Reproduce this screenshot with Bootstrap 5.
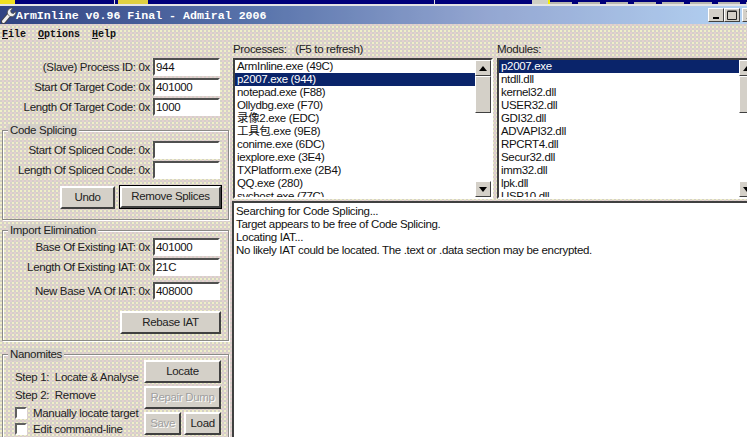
<!doctype html>
<html><head><meta charset="utf-8">
<link href="https://cdn.jsdelivr.net/npm/bootstrap@5.3.0/dist/css/bootstrap.min.css" rel="stylesheet">
<style>
html,body{height:437px;overflow:hidden;margin:0}
body{width:747px;background:#fff;font-family:"Liberation Sans","Noto Sans CJK SC",sans-serif;font-size:11.5px;letter-spacing:-.33px;line-height:13px;color:#111}
.topstrip{height:4px;background-color:#00007a;background-image:repeating-linear-gradient(90deg,#b8b8b0 0,#b8b8b0 22px,transparent 22px,transparent 28px),linear-gradient(90deg,#f0e020 0,#f0e020 15px,transparent 15px,transparent 114px,#ddd 114px,#ddd 115px,transparent 115px,transparent 118px,#e0d040 118px,#e0d040 148px,transparent 148px,transparent 434px,#ddd 434px,#ddd 435px,transparent 435px,transparent 532px,#cfcfc4 532px,#cfcfc4 548px,#f4f000 548px,#f4f000 550px,transparent 550px);background-size:197px 2px,100% 100%;background-position:right bottom,0 0;background-repeat:no-repeat}
.topline{height:2px;background:#e4e4e4}
.wframe{height:431px;background-color:#d4d0c8;background-image:radial-gradient(circle at 1px 1px,#f0eec8 .8px,transparent 1px),radial-gradient(circle at 3px 3px,#e4d0d0 .8px,transparent 1px);background-size:4px 4px}
.ttl{height:18px;background-color:#0a246a;background-image:radial-gradient(circle at 1px 1px,rgba(255,255,255,.16) .8px,transparent 1px),linear-gradient(90deg,#0a1f6a,#3a5a9c 35%,#7f95c8 65%,#a6caf0);background-size:2px 2px,100% 100%;color:#fff;font:bold 11.6px "Liberation Mono",monospace;letter-spacing:0;padding-left:1px}
.ttl svg{flex:none}
.wb{width:16px;height:14px;background:#d4d0c8;border:1px solid;border-color:#fff #404040 #404040 #fff;flex:none;display:flex;align-items:center;justify-content:center}
.wbs{margin-right:-11px}
.wbs .wb+.wb+.wb{margin-left:2px}
.menubar{height:18px;font-family:"Liberation Mono",monospace;font-weight:bold;font-size:10px;letter-spacing:0;padding:4px 2px;gap:12px}
.leftp{width:232px;flex:none}
.rowf{height:20px;display:flex;justify-content:flex-end;padding-right:12px;color:#222;line-height:18px}
.grp .rowf{padding-right:8px}
.fld{width:67px;height:18px;background:#fff;border:2px solid;border-color:#505050 #fff #fff #505050;padding:1px;margin-left:3px;flex:none;line-height:13px;color:#111}
.grp{border:1px solid #8a8a86;box-shadow:1px 1px 0 #fff,inset 1px 1px 0 #fff;position:relative;margin:0 3px 0 2px}
.grp>.lgd{position:absolute;top:-7px;left:5px;padding:0 2px;background:#d4d0c8;color:#222}
.bt{background:#d4d0c8;border:2px solid;border-color:#fff #404040 #404040 #fff;text-align:center;height:23px;line-height:18px;color:#222;flex:none}
.bt.def{outline:1px solid #000;height:22px;line-height:17px}
.bt.dis{color:#a0a0a0;text-shadow:1px 1px 0 #fff}
.btrow{display:flex;justify-content:flex-end;padding-right:7px;gap:5px}
.lbox{background:#fff;border:2px solid;border-color:#404040 #fff #fff #404040;overflow:hidden;position:relative;height:141px;width:260px}
.it{height:13px;padding-left:2px;white-space:nowrap}
.it.sel{background:#0a246a;color:#fff}
.sb{position:absolute;top:0;right:0;width:16px;bottom:0;background-color:#e6e2da;background-image:radial-gradient(circle at 1px 1px,#fff .8px,transparent 1px);background-size:2px 2px}
.sb .arw{position:absolute;left:0;width:16px;height:16px;background:#d4d0c8;border:1px solid;border-color:#fff #404040 #404040 #fff;display:flex;align-items:center;justify-content:center}
.sb .thb{position:absolute;left:0;top:16px;width:16px;height:37px;background:#d4d0c8;border:1px solid;border-color:#fff #404040 #404040 #fff}
.logb{background:#fff;border:2px solid;border-color:#404040 #fff #fff #404040;height:240px;padding:2px;margin-top:2px;width:540px}
.cap{height:16px;color:#222;line-height:14px}
.chk{width:12px;height:12px;background:#fff;border:2px solid;border-color:#606060 #fff #fff #606060;flex:none;margin-right:6px}
.gp1{padding:10px 0;margin-top:12px}
.gp1 .btrow{margin-top:5px}
.gp2{padding:7px 0 6px;margin-top:10px}
.gp2 .btrow{margin-top:9px}
.gp3{height:100px;margin-top:13px;display:flex}
.nleft{flex:1 1 auto;padding:13px 0 0 12px;white-space:nowrap;color:#222}
.nright{width:84px;flex:none;padding:5px 7px 0 0;display:flex;flex-direction:column;gap:3px}
.nst{height:18px;line-height:18px}
.nck{display:flex;align-items:center;height:16px}
.nck.first{margin-top:1px}
.rcol{flex:none;width:525px}
.lists{display:flex;gap:4px;padding-left:1px}
</style></head>
<body>
<div class="topstrip"></div><div class="topline"></div>
<div class="wframe">
  <div class="ttl d-flex align-items-center">
    <svg width="15" height="17" viewBox="0 0 15 17"><path d="M2.5 14.5L8 8" stroke="#444" stroke-width="5" stroke-linecap="round" fill="none"/><path d="M2.5 14.5L8 8" stroke="#f0f0f0" stroke-width="3" stroke-linecap="round" fill="none"/><path d="M6.5 7A4.6 4.6 0 0 1 11.8 1.2L9.6 3.8 10.4 6 12.6 6.4 14.7 4A4.6 4.6 0 0 1 9 9.6Z" fill="#f0f0f0" stroke="#444" stroke-width=".8"/></svg>
    <span>ArmInline v0.96 Final - Admiral 2006</span>
    <div class="ms-auto d-flex wbs">
      <div class="wb"><svg width="8" height="8"><rect x="1" y="6" width="6" height="2"/></svg></div>
      <div class="wb"><svg width="10" height="10"><path d="M.5 1.5h9v8h-9zM.5 1h9" fill="none" stroke="#222"/></svg></div>
      <div class="wb"><svg width="9" height="8"><path d="M1 0L8 8M8 0L1 8" stroke="#000" stroke-width="1.4"/></svg></div>
    </div>
  </div>
  <div class="menubar d-flex"><span><u>F</u>ile</span><span><u>O</u>ptions</span><span><u>H</u>elp</span></div>
  <div class="d-flex">
    <div class="leftp">
      <div class="pt-3">
        <div class="rowf">(Slave) Process ID: 0x<div class="fld">944</div></div>
        <div class="rowf">Start Of Target Code: 0x<div class="fld">401000</div></div>
        <div class="rowf">Length Of Target Code: 0x<div class="fld">1000</div></div>
      </div>
      <div class="grp gp1"><span class="lgd">Code Splicing</span>
        <div class="rowf">Start Of Spliced Code: 0x<div class="fld"></div></div>
        <div class="rowf">Length Of Spliced Code: 0x<div class="fld"></div></div>
        <div class="btrow"><div class="bt" style="width:55px">Undo</div><div class="bt def" style="width:101px">Remove Splices</div></div>
      </div>
      <div class="grp gp2"><span class="lgd">Import Elimination</span>
        <div class="rowf">Base Of Existing IAT: 0x<div class="fld">401000</div></div>
        <div class="rowf">Length Of Existing IAT: 0x<div class="fld">21C</div></div>
        <div class="rowf mt-1">New Base VA Of IAT: 0x<div class="fld">408000</div></div>
        <div class="btrow"><div class="bt" style="width:101px">Rebase IAT</div></div>
      </div>
      <div class="grp gp3"><span class="lgd">Nanomites</span>
        <div class="nleft">
          <div class="nst">Step 1:&nbsp; Locate &amp; Analyse</div>
          <div class="nst">Step 2:&nbsp; Remove</div>
          <div class="nck first"><span class="chk"></span>Manually locate target</div>
          <div class="nck"><span class="chk"></span>Edit command-line</div>
        </div>
        <div class="nright">
          <div class="bt">Locate</div><div class="bt dis">Repair Dump</div>
          <div class="d-flex" style="gap:3px"><div class="bt dis flex-fill">Save</div><div class="bt flex-fill">Load</div></div>
        </div>
      </div>
    </div>
    <div class="rcol">
      <div class="lists">
        <div>
          <div class="cap">Processes: &nbsp; (F5 to refresh)</div>
          <div class="lbox">
            <div class="it">ArmInline.exe (49C)</div><div class="it sel">p2007.exe (944)</div><div class="it">notepad.exe (F88)</div><div class="it">Ollydbg.exe (F70)</div><div class="it">录像2.exe (EDC)</div><div class="it">工具包.exe (9E8)</div><div class="it">conime.exe (6DC)</div><div class="it">iexplore.exe (3E4)</div><div class="it">TXPlatform.exe (2B4)</div><div class="it">QQ.exe (280)</div><div class="it">svchost.exe (77C)</div>
            <div class="sb"><div class="arw" style="top:0"><svg width="8" height="5"><path d="M4 0L8 5H0Z"/></svg></div><div class="thb"></div><div class="arw" style="bottom:0"><svg width="8" height="5"><path d="M0 0H8L4 5Z"/></svg></div></div>
          </div>
        </div>
        <div>
          <div class="cap">Modules:</div>
          <div class="lbox">
            <div class="it sel">p2007.exe</div><div class="it">ntdll.dll</div><div class="it">kernel32.dll</div><div class="it">USER32.dll</div><div class="it">GDI32.dll</div><div class="it">ADVAPI32.dll</div><div class="it">RPCRT4.dll</div><div class="it">Secur32.dll</div><div class="it">imm32.dll</div><div class="it">lpk.dll</div><div class="it">USP10.dll</div>
            <div class="sb"><div class="arw" style="top:0"><svg width="8" height="5"><path d="M4 0L8 5H0Z"/></svg></div><div class="thb"></div><div class="arw" style="bottom:0"><svg width="8" height="5"><path d="M0 0H8L4 5Z"/></svg></div></div>
          </div>
        </div>
      </div>
      <div class="logb">
        <div>Searching for Code Splicing...</div><div>Target appears to be free of Code Splicing.</div><div>Locating IAT...</div><div>No likely IAT could be located. The .text or .data section may be encrypted.</div>
      </div>
    </div>
  </div>
</div>
</body></html>
